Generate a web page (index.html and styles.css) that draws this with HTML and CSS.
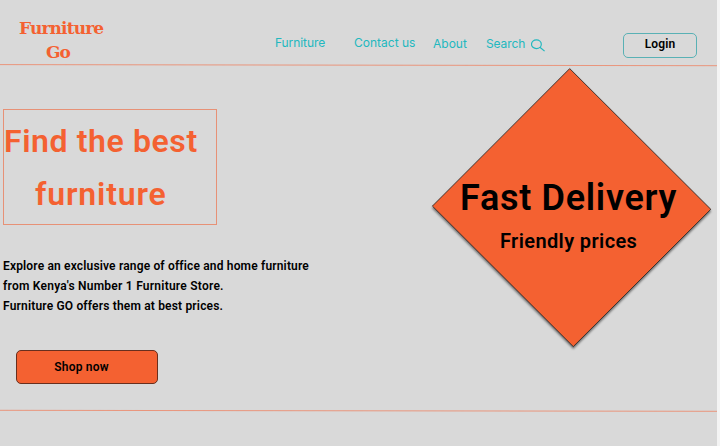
FILE: index.html
```html
<!DOCTYPE html>
<html lang="en">
<head>
<meta charset="utf-8">
<title>Furniture Go</title>
<link rel="stylesheet" href="styles.css">
</head>
<body>
<div class="page">
  <header class="header">
    <div class="logo"><span class="logo-top">Furniture</span><span class="logo-bottom">Go</span></div>
    <nav class="nav">
      <a class="nav-furniture">Furniture</a>
      <a class="nav-contact">Contact us</a>
      <a class="nav-about">About</a>
      <a class="nav-search">Search
        <svg class="search-icon" width="15" height="14" viewBox="0 0 15 14"><ellipse cx="5.4" cy="5.2" rx="4.9" ry="4.4"/><path d="M8.9 8.2 13.6 12.1"/></svg>
      </a>
    </nav>
    <button class="login">Login</button>
  </header>
  <svg class="rule" width="718" height="3" viewBox="0 0 718 3"><path d="M0 .6 718 1.7"/></svg>
  <main class="hero">
    <section class="intro">
      <h1 class="title"><span class="title-first">Find the best</span><span class="title-second">furniture</span></h1>
      <p class="copy"><span class="copy-a">Explore an exclusive range of office and home furniture</span><span class="copy-b">from Kenya's Number 1 Furniture Store.</span><span class="copy-c">Furniture GO offers them at best prices.</span></p>
      <button class="shop">Shop now</button>
    </section>
    <section class="promo">
      <svg class="diamond" width="288" height="290" viewBox="0 0 288 290"><path d="M141.7 1.6 282.8 142.3 145.3 279.6 4.4 139.1Z"/></svg>
      <div class="promo-text">
        <h2>Fast Delivery</h2>
        <p>Friendly prices</p>
      </div>
    </section>
  </main>
  <svg class="rule" width="718" height="3" viewBox="0 0 718 3"><path d="M0 1.3 718 2.3"/></svg>
</div>
</body>
</html>
```
FILE: styles.css
```css
* { box-sizing: border-box; }
body { margin: 0; background: #f4f4f4; }
h1, h2, p { margin: 0; }
svg { display: block; }
.page {
  width: 717px;
  height: 446px;
  overflow: hidden;
  background: #d9d9d9;
  color: #000;
  font-family: Roboto, "Open Sans", sans-serif;
  font-weight: 600;
}
.header { display: flex; height: 64px; align-items: flex-start; }
.logo {
  width: 85px;
  margin: 16px 0 0 19px;
  color: #f46131;
  font: 700 17px/24px "DejaVu Serif", serif;
  white-space: nowrap;
}
.logo span { display: block; }
.logo-top { letter-spacing: -0.85px; }
.logo-bottom { padding-left: 27px; letter-spacing: -1px; }
.nav {
  display: flex;
  width: 348px;
  margin: 36px 0 0 171px;
  color: #22b8bf;
  font: 400 12px/14px Inter, sans-serif;
  white-space: nowrap;
}
.nav-furniture { width: 79px; letter-spacing: -.08px; }
.nav-contact { width: 79px; }
.nav-about { width: 53px; margin-top: 1px; }
.nav-search { display: flex; gap: 6px; margin-top: 1px; letter-spacing: -.1px; }
.search-icon { margin-top: 2px; fill: none; stroke: #22b8bf; stroke-width: 1.2; }
.login {
  width: 74px;
  height: 25px;
  margin-top: 33px;
  padding: 0 0 3px;
  border: 1px solid #59b1b5;
  border-radius: 5px;
  background: transparent;
  color: #000;
  font: 600 12px/18px Roboto, sans-serif;
  letter-spacing: .1px;
}
.rule { fill: none; stroke: #ed8465; stroke-width: .8; }
.hero { display: grid; grid-template-columns: 428px 288px; height: 342px; }
.intro { padding: 42px 0 0 3px; }
.title {
  width: 214px;
  height: 116px;
  padding-top: 5px;
  border: 1px solid #e79176;
  color: #f46131;
  font-size: 32px;
  font-weight: 600;
  line-height: 53px;
  white-space: nowrap;
}
.title span, .copy span { display: block; }
.title-first { letter-spacing: .6px; }
.title-second { padding-left: 31px; letter-spacing: .85px; }
.copy { margin-top: 31px; font-size: 12px; line-height: 20px; white-space: nowrap; }
.copy-a { letter-spacing: .165px; }
.copy-b { letter-spacing: .24px; }
.copy-c { letter-spacing: .175px; }
.shop {
  display: block;
  width: 142px;
  height: 34px;
  margin: 34px 0 0 13px;
  padding: 0 11px 1px 0;
  border: 1px solid #682f1e;
  border-radius: 5px;
  background: #f46131;
  color: #000;
  font: 600 12px/18px Roboto, sans-serif;
  letter-spacing: .2px;
}
.promo { display: grid; }
.diamond, .promo-text { grid-area: 1 / 1; }
.diamond { fill: #f46131; stroke: #222; stroke-width: .8; filter: drop-shadow(0 2px 1px rgba(0, 0, 0, .5)); }
.promo-text { position: relative; padding: 109px 0 0 32px; white-space: nowrap; }
.promo h2 { font-size: 36px; font-weight: 600; line-height: 44px; letter-spacing: .7px; }
.promo p { padding: 6px 0 0 40px; font-size: 20px; line-height: 30px; letter-spacing: .38px; }
```
